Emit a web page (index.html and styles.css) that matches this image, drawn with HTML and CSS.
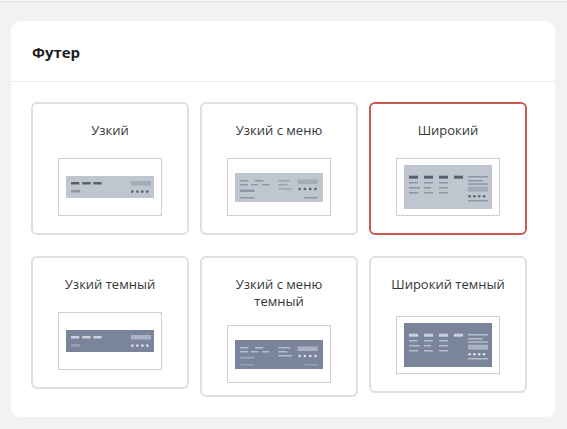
FILE: index.html
```html
<!DOCTYPE html>
<html lang="ru">
<head>
<meta charset="utf-8">
<title>Футер</title>
<link rel="stylesheet" href="styles.css">
</head>
<body>
<div class="topbar"></div>
<section class="card">
  <header class="card-head">Футер</header>
  <div class="card-body">
    <div class="grid">
      <div class="tile">
        <div class="title">Узкий</div>
        <div class="preview">
          <svg class="pv pv-light" width="88" height="22" viewBox="0 0 88 22">
            <rect class="bg" width="88" height="22"/>
            <rect class="d" x="5" y="6" width="8.3" height="2.5"/>
            <rect class="d" x="16.3" y="6" width="8.3" height="2.5"/>
            <rect class="d" x="27.3" y="6" width="8.3" height="2.5"/>
            <rect class="m" x="5" y="14" width="9" height="2.5"/>
            <rect class="b" x="65" y="5" width="20" height="4.5"/>
            <circle class="dot" cx="66.3" cy="15.6" r="1.3"/>
            <circle class="dot" cx="71.3" cy="15.6" r="1.3"/>
            <circle class="dot" cx="76.3" cy="15.6" r="1.3"/>
            <circle class="dot" cx="81.3" cy="15.6" r="1.3"/>
          </svg>
        </div>
      </div>
      <div class="tile">
        <div class="title">Узкий с меню</div>
        <div class="preview">
          <svg class="pv pv-light" width="88" height="29" viewBox="0 0 88 29">
            <rect class="bg" width="88" height="29"/>
            <rect class="m" x="5" y="7" width="8.3" height="1.5"/>
            <rect class="m" x="20" y="7" width="8.3" height="1.5"/>
            <rect class="m" x="5" y="11" width="7.7" height="1.5"/>
            <rect class="m" x="16" y="11" width="7.3" height="1.5"/>
            <rect class="m" x="27.3" y="11" width="7" height="1.5"/>
            <rect class="m" x="5" y="16.5" width="14.3" height="2.5"/>
            <rect class="m" x="5" y="24" width="14.3" height="1.5"/>
            <rect class="s" x="43.3" y="7" width="11.7" height="1.5"/>
            <rect class="s" x="43.3" y="11" width="9" height="1.5"/>
            <rect class="s" x="43.3" y="15" width="13.4" height="1.5"/>
            <rect class="b" x="62.7" y="6.5" width="20" height="4.5"/>
            <circle class="dot" cx="64.6" cy="16" r="1.3"/>
            <circle class="dot" cx="69.9" cy="16" r="1.3"/>
            <circle class="dot" cx="75.2" cy="16" r="1.3"/>
            <circle class="dot" cx="80.5" cy="16" r="1.3"/>
            <rect class="m" x="69" y="24" width="13.7" height="1.5"/>
          </svg>
        </div>
      </div>
      <div class="tile is-active">
        <div class="title">Широкий</div>
        <div class="preview">
          <svg class="pv pv-light" width="88" height="44" viewBox="0 0 88 44">
            <rect class="bg" width="88" height="44"/>
            <rect class="d" x="5" y="10.7" width="9" height="3"/>
            <rect class="d" x="20" y="10.7" width="9" height="3"/>
            <rect class="d" x="35" y="10.7" width="9" height="3"/>
            <rect class="d" x="50" y="10.7" width="9" height="3"/>
            <rect class="m" x="5" y="17" width="9" height="1.5"/>
            <rect class="m" x="5" y="22" width="11" height="1.5"/>
            <rect class="m" x="5" y="27" width="9" height="1.5"/>
            <rect class="m" x="20" y="17" width="9" height="1.5"/>
            <rect class="m" x="20" y="22" width="7" height="1.5"/>
            <rect class="m" x="20" y="27" width="9" height="1.5"/>
            <rect class="m" x="35" y="17" width="9" height="1.5"/>
            <rect class="m" x="35" y="22" width="9" height="1.5"/>
            <rect class="m" x="35" y="27" width="9" height="1.5"/>
            <rect class="m" x="64" y="11" width="20" height="1.5"/>
            <rect class="m" x="64" y="15" width="15" height="1.5"/>
            <rect class="m" x="64" y="18.3" width="20" height="1.5"/>
            <rect class="b" x="64" y="21.7" width="20" height="5"/>
            <circle class="dot" cx="65.6" cy="31.3" r="1.3"/>
            <circle class="dot" cx="70.4" cy="31.3" r="1.3"/>
            <circle class="dot" cx="75.2" cy="31.3" r="1.3"/>
            <circle class="dot" cx="80" cy="31.3" r="1.3"/>
            <rect class="m" x="64" y="35" width="20" height="1.5"/>
          </svg>
        </div>
      </div>

      <div class="tile">
        <div class="title">Узкий темный</div>
        <div class="preview">
          <svg class="pv pv-dark" width="88" height="22" viewBox="0 0 88 22">
            <rect class="bg" width="88" height="22"/>
            <rect class="d" x="5" y="6" width="8.3" height="2.5"/>
            <rect class="d" x="16.3" y="6" width="8.3" height="2.5"/>
            <rect class="d" x="27.3" y="6" width="8.3" height="2.5"/>
            <rect class="s" x="5" y="14" width="9" height="2.5"/>
            <rect class="b" x="65" y="5" width="20" height="4.5"/>
            <circle class="dot" cx="66.3" cy="15.6" r="1.3"/>
            <circle class="dot" cx="71.3" cy="15.6" r="1.3"/>
            <circle class="dot" cx="76.3" cy="15.6" r="1.3"/>
            <circle class="dot" cx="81.3" cy="15.6" r="1.3"/>
          </svg>
        </div>
      </div>
      <div class="tile tile-2line">
        <div class="title">Узкий с меню<br>темный</div>
        <div class="preview">
          <svg class="pv pv-dark" width="88" height="29" viewBox="0 0 88 29">
            <rect class="bg" width="88" height="29"/>
            <rect class="m" x="5" y="7" width="8.3" height="1.5"/>
            <rect class="m" x="20" y="7" width="8.3" height="1.5"/>
            <rect class="m" x="5" y="11" width="7.7" height="1.5"/>
            <rect class="m" x="16" y="11" width="7.3" height="1.5"/>
            <rect class="m" x="27.3" y="11" width="7" height="1.5"/>
            <rect class="s" x="5" y="16.5" width="14.3" height="2.5"/>
            <rect class="s" x="5" y="24" width="14.3" height="1.5"/>
            <rect class="m" x="43.3" y="7" width="11.7" height="1.5"/>
            <rect class="m" x="43.3" y="11" width="9" height="1.5"/>
            <rect class="m" x="43.3" y="15" width="13.4" height="1.5"/>
            <rect class="b" x="62.7" y="6.5" width="20" height="4.5"/>
            <circle class="dot" cx="64.6" cy="16" r="1.3"/>
            <circle class="dot" cx="69.9" cy="16" r="1.3"/>
            <circle class="dot" cx="75.2" cy="16" r="1.3"/>
            <circle class="dot" cx="80.5" cy="16" r="1.3"/>
            <rect class="s" x="69" y="24" width="13.7" height="1.5"/>
          </svg>
        </div>
      </div>
      <div class="tile tile-wide-dark">
        <div class="title">Широкий темный</div>
        <div class="preview">
          <svg class="pv pv-dark" width="88" height="44" viewBox="0 0 88 44">
            <rect class="bg" width="88" height="44"/>
            <rect class="d" x="5" y="10.7" width="9" height="3"/>
            <rect class="d" x="20" y="10.7" width="9" height="3"/>
            <rect class="d" x="35" y="10.7" width="9" height="3"/>
            <rect class="d" x="50" y="10.7" width="9" height="3"/>
            <rect class="m" x="5" y="17" width="9" height="1.5"/>
            <rect class="m" x="5" y="22" width="11" height="1.5"/>
            <rect class="m" x="5" y="27" width="9" height="1.5"/>
            <rect class="m" x="20" y="17" width="9" height="1.5"/>
            <rect class="m" x="20" y="22" width="7" height="1.5"/>
            <rect class="m" x="20" y="27" width="9" height="1.5"/>
            <rect class="m" x="35" y="17" width="9" height="1.5"/>
            <rect class="m" x="35" y="22" width="9" height="1.5"/>
            <rect class="m" x="35" y="27" width="9" height="1.5"/>
            <rect class="m" x="64" y="11" width="20" height="1.5"/>
            <rect class="m" x="64" y="15" width="15" height="1.5"/>
            <rect class="m" x="64" y="18.3" width="20" height="1.5"/>
            <rect class="b" x="64" y="21.7" width="20" height="5"/>
            <circle class="dot" cx="65.6" cy="31.3" r="1.3"/>
            <circle class="dot" cx="70.4" cy="31.3" r="1.3"/>
            <circle class="dot" cx="75.2" cy="31.3" r="1.3"/>
            <circle class="dot" cx="80" cy="31.3" r="1.3"/>
            <rect class="m" x="64" y="35" width="20" height="1.5"/>
          </svg>
        </div>
      </div>
    </div>
  </div>
</section>
</body>
</html>
```
FILE: styles.css
```css
* { box-sizing: border-box; }

html, body {
  margin: 0;
  padding: 0;
}

body {
  background: #f2f1f4;
  font-family: "Open Sans", "Liberation Sans", sans-serif;
  color: #333;
  height: 429px;
  overflow: hidden;
}

.topbar {
  height: 2px;
  background: #fafafa;
  border-bottom: 1px solid #dedde1;
}

.card {
  margin: 19px 0 0 11px;
  width: 544px;
  background: #fff;
  border-radius: 9px;
}

.card-head {
  padding: 21px 21px 0;
  height: 61px;
  font-size: 15px;
  line-height: 20px;
  font-weight: 700;
  color: #1e1e1e;
  border-bottom: 1px solid #ededef;
}

.card-body {
  padding: 20px 28px 20px 20px;
}

.grid {
  display: grid;
  grid-template-columns: repeat(3, 158px);
  column-gap: 11px;
  row-gap: 21px;
  align-items: start;
}

.tile {
  display: flex;
  flex-direction: column;
  align-items: center;
  border: 2px solid #dfdfe1;
  border-radius: 6px;
  padding: 18px 8px 17px;
  background: #fff;
}

.tile.is-active {
  border-color: #c95a4e;
}

.title {
  font-size: 13px;
  line-height: 17px;
  color: #363636;
  text-align: center;
}

.preview {
  margin-top: 19px;
  width: 104px;
  height: 58px;
  border: 1px solid #cfcfd1;
  display: flex;
  align-items: center;
  justify-content: center;
  background: #fff;
}

.tile-2line .preview { margin-top: 15px; }
.tile-2line { padding-bottom: 12px; }
.tile-wide-dark .preview { margin-top: 23px; }

.pv { display: block; }

.pv-light .bg { fill: #bfc6d0; }
.pv-light .d { fill: #56616e; }
.pv-light .m { fill: #8c95a2; }
.pv-light .s { fill: #9ba4b0; }
.pv-light .b { fill: #a4acb8; }
.pv-light .dot { fill: #56616e; }

.pv-dark .bg { fill: #7a849a; }
.pv-dark .d { fill: #cbd1dd; }
.pv-dark .m { fill: #b6bdcc; }
.pv-dark .s { fill: #98a1b4; }
.pv-dark .b { fill: #aab2c3; }
.pv-dark .dot { fill: #dde1e9; }
```
